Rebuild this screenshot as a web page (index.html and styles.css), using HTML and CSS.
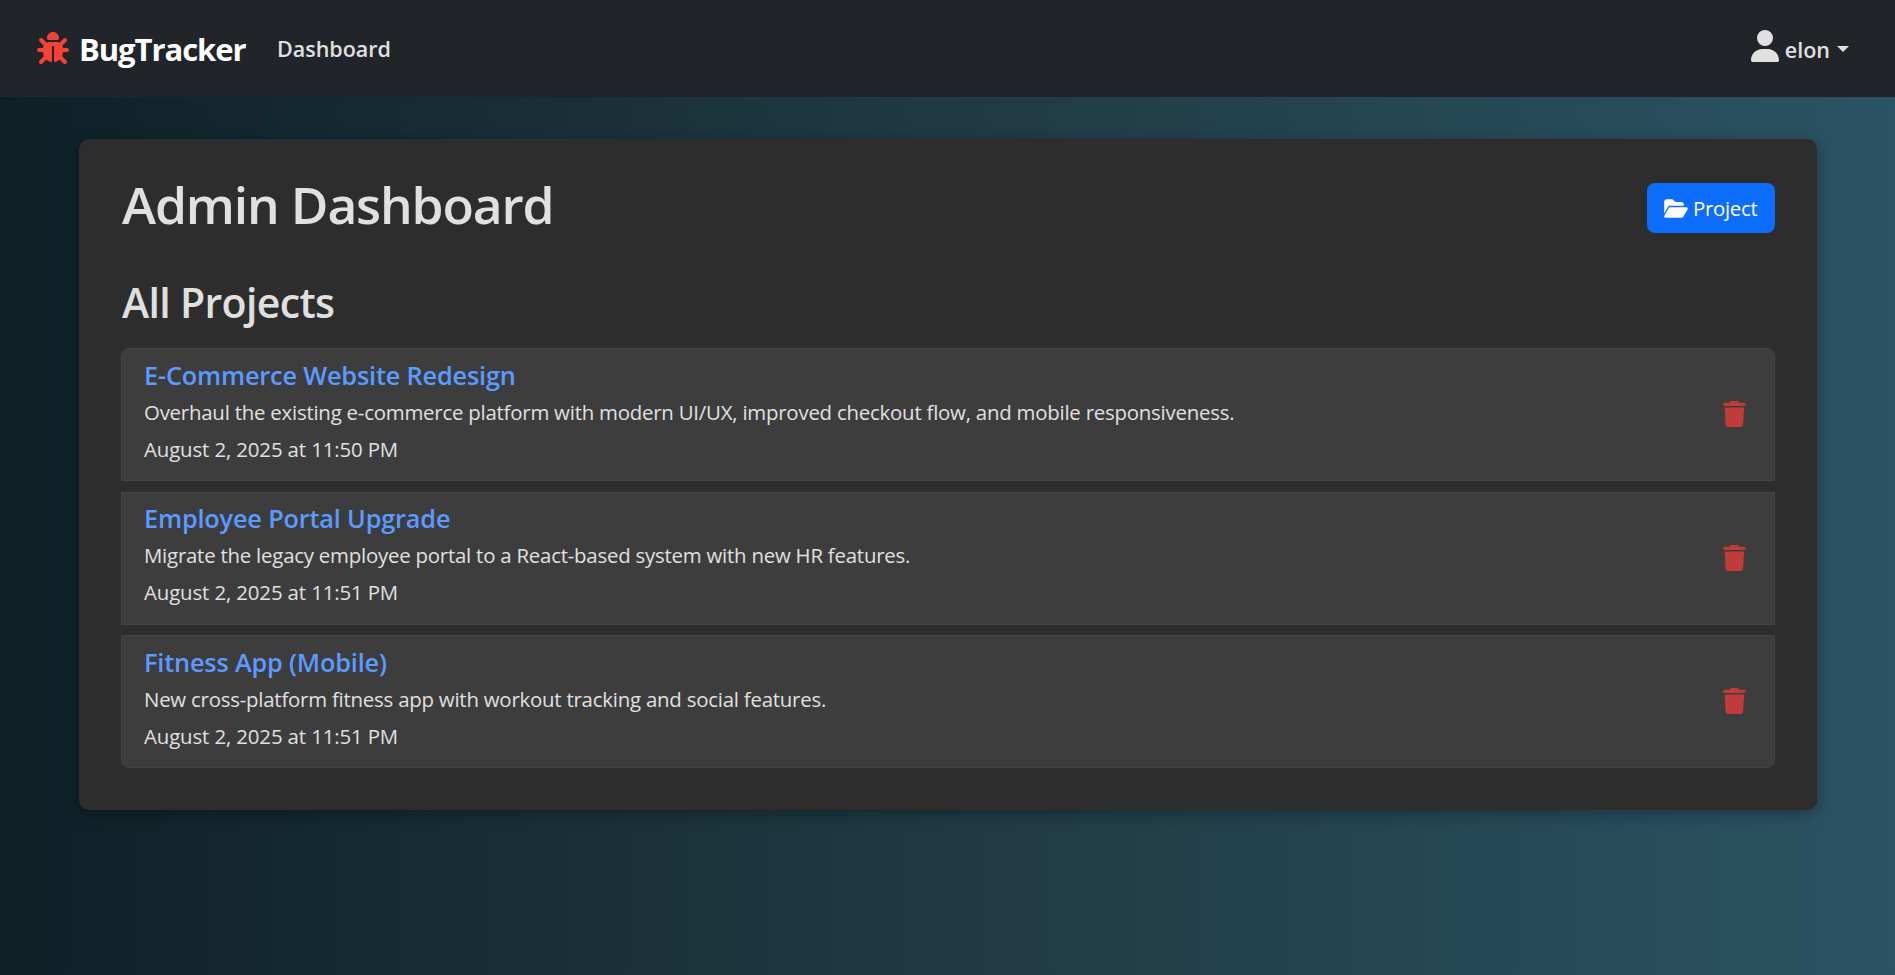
FILE: index.html
```html
<!DOCTYPE html>
<html lang="en">
<head>
<meta charset="utf-8">
<title>BugTracker</title>
<link rel="stylesheet" href="styles.css">
</head>
<body>
<svg class="sprite" aria-hidden="true">
  <symbol id="trash" viewBox="0 0 448 512"><path d="M135.2 17.7L128 32H32C14.3 32 0 46.3 0 64S14.3 96 32 96H416c17.7 0 32-14.3 32-32s-14.3-32-32-32H320l-7.2-14.3C307.400 6.800 296.300 0 284.200 0H163.800c-12.100 0-23.200 6.800-28.600 17.700zM416 128H32L53.200 467c1.600 25.300 22.600 45 47.900 45H346.900c25.300 0 46.300-19.700 47.900-45L416 128z"/></symbol>
</svg>
<nav class="navbar">
  <a class="brand"><svg class="bug" viewBox="0 0 512 512"><path d="M256 0c53 0 96 43 96 96v3.600c0 15.700-12.700 28.400-28.400 28.400H188.400c-15.700 0-28.400-12.700-28.400-28.400V96c0-53 43-96 96-96zM41.400 105.400c12.500-12.500 32.800-12.500 45.300 0l64 64c.7 .7 1.300 1.400 1.900 2.100c14.200-7.300 30.400-11.400 47.500-11.400H312c17.100 0 33.200 4.100 47.500 11.400c.6-.7 1.200-1.400 1.900-2.100l64-64c12.500-12.500 32.800-12.500 45.300 0s12.500 32.800 0 45.300l-64 64c-.7 .7-1.400 1.300-2.100 1.900c6.200 12 10.100 25.300 11.100 39.500H480c17.700 0 32 14.300 32 32s-14.300 32-32 32H416c0 24.600-5.500 47.800-15.400 68.600c2.200 1.300 4.200 2.900 6 4.800l64 64c12.500 12.500 12.500 32.800 0 45.300s-32.800 12.500-45.300 0l-63.100-63.100c-24.500 21.800-55.800 36.200-90.300 39.600V240c0-8.800-7.200-16-16-16s-16 7.200-16 16V479.200c-34.500-3.400-65.800-17.800-90.300-39.600L86.600 502.600c-12.500 12.500-32.800 12.500-45.300 0s-12.500-32.800 0-45.300l64-64c1.900-1.900 3.900-3.400 6-4.800C101.500 367.800 96 344.600 96 320H32c-17.700 0-32-14.300-32-32s14.300-32 32-32H96.300c1.100-14.100 5-27.500 11.100-39.500c-.7-.6-1.400-1.200-2.100-1.900l-64-64c-12.500-12.500-12.500-32.800 0-45.300z"/></svg><span class="brand-name">BugTracker</span></a>
  <a class="nav-link">Dashboard</a>
  <a class="user"><svg class="avatar" viewBox="0 0 448 512"><path d="M224 256A128 128 0 1 0 224 0a128 128 0 1 0 0 256zm-45.700 48C79.800 304 0 383.800 0 482.300C0 498.700 13.300 512 29.700 512H418.300c16.400 0 29.700-13.300 29.700-29.700C448 383.800 368.200 304 269.700 304H178.300z"/></svg><span class="user-name">elon</span><i class="caret"></i></a>
</nav>
<main class="panel">
  <header class="panel-head">
    <h1>Admin Dashboard</h1>
    <button class="btn"><svg class="folder" viewBox="0 0 576 512"><path d="M88.700 223.800L0 375.800V96C0 60.700 28.700 32 64 32H181.500c17 0 33.300 6.700 45.300 18.700l26.500 26.500c12 12 28.300 18.700 45.300 18.700H416c35.300 0 64 28.700 64 64v32H144c-22.800 0-43.800 12.100-55.300 31.800zm27.600 16.100C122.100 230 132.600 224 144 224H544c11.500 0 22 6.100 27.700 16.100s5.700 22.200-.1 32.100l-112 192C453.900 474 443.400 480 432 480H32c-11.500 0-22-6.100-27.700-16.100s-5.700-22.200 .1-32.100l112-192z"/></svg><span>Project</span></button>
  </header>
  <h2>All Projects</h2>
  <ul class="projects">
    <li class="project">
      <div>
        <h3>E-Commerce Website Redesign</h3>
        <p class="desc">Overhaul the existing e-commerce platform with modern UI/UX, improved checkout flow, and mobile responsiveness.</p>
        <p class="date">August 2, 2025 at 11:50 PM</p>
      </div>
      <svg class="trash"><use href="#trash"/></svg>
    </li>
    <li class="project">
      <div>
        <h3>Employee Portal Upgrade</h3>
        <p class="desc">Migrate the legacy employee portal to a React-based system with new HR features.</p>
        <p class="date">August 2, 2025 at 11:51 PM</p>
      </div>
      <svg class="trash"><use href="#trash"/></svg>
    </li>
    <li class="project">
      <div>
        <h3>Fitness App (Mobile)</h3>
        <p class="desc">New cross-platform fitness app with workout tracking and social features.</p>
        <p class="date">August 2, 2025 at 11:51 PM</p>
      </div>
      <svg class="trash"><use href="#trash"/></svg>
    </li>
  </ul>
</main>
</body>
</html>
```
FILE: styles.css
```css
* { box-sizing: border-box; margin: 0; padding: 0; }
body {
  min-height: 975px;
  font-family: "Open Sans", "Noto Sans", sans-serif;
  font-size: 20.4px;
  color: #e0e0e0;
  background: linear-gradient(to right, #0f2027, #203a43, #2c5364);
}
.sprite { position: absolute; width: 0; height: 0; }
svg { fill: currentColor; flex: none; }
.navbar {
  display: flex;
  align-items: center;
  height: 97px;
  padding: 0 46px 0 37px;
  background: #212529;
}
.brand { display: flex; align-items: center; color: #fff; }
.bug { width: 32px; height: 32px; margin: -1px 10px 0 0; color: #f44336; }
.brand-name { width: 198px; font-size: 31px; font-weight: 700; line-height: 48px; letter-spacing: -1.05px; padding-top: 1px; }
.nav-link { font-size: 21.500px; font-weight: 600; line-height: 30px; padding-top: 1px; }
.user { display: flex; align-items: center; margin-left: auto; font-size: 21.500px; font-weight: 600; }
.avatar { width: 28px; height: 32px; margin: -5px 6px 0 0; }
.user-name { line-height: 30px; padding-top: 2px; }
.caret { margin-left: 7px; border: 6px solid transparent; border-top-color: currentColor; border-bottom: 0; }
.panel {
  width: 1738px;
  height: 671px;
  margin: 42px auto 0 79px;
  padding: 42px 42px 0 42px;
  border-radius: 10px;
  background: #2d2d2d;
  box-shadow: 0 4px 15px rgba(0, 0, 0, 0.3);
}
.panel-head { display: flex; justify-content: space-between; height: 84px; }
h1 { font-size: 51.500px; font-weight: 600; line-height: 62px; letter-spacing: -1.15px; padding-left: 1px; margin-top: -8px; }
.btn {
  display: flex;
  align-items: center;
  gap: 5px;
  width: 128px;
  height: 50px;
  margin-top: 2px;
  padding: 0 17px;
  border: 0;
  border-radius: 8px;
  background: #0d6efd;
  color: #fff;
  font: inherit;
  letter-spacing: -0.3px;
}
.folder { width: 24px; height: 21px; }
h2 { font-size: 41px; font-weight: 600; line-height: 50px; letter-spacing: -0.65px; padding-left: 1px; margin-top: 12px; height: 71px; }
.projects { display: grid; gap: 10.500px; list-style: none; }
.project {
  display: flex;
  justify-content: space-between;
  align-items: center;
  height: 133px;
  padding: 0 28px 0 22px;
  border: 1px solid #444;
  background: #3d3d3d;
}
.project:first-child { border-radius: 8px 8px 0 0; }
.project:last-child { border-radius: 0 0 8px 8px; }
h3 { font-size: 25.300px; font-weight: 600; line-height: 32px; margin: -3px 0 3px; letter-spacing: -0.18px; color: #5c9aff; }
.desc, .date { line-height: 37px; white-space: nowrap; letter-spacing: -0.22px; }
.date { letter-spacing: -0.12px; }
.trash { width: 22.750px; height: 26px; margin-top: -1px; color: #c23b3b; }
```
